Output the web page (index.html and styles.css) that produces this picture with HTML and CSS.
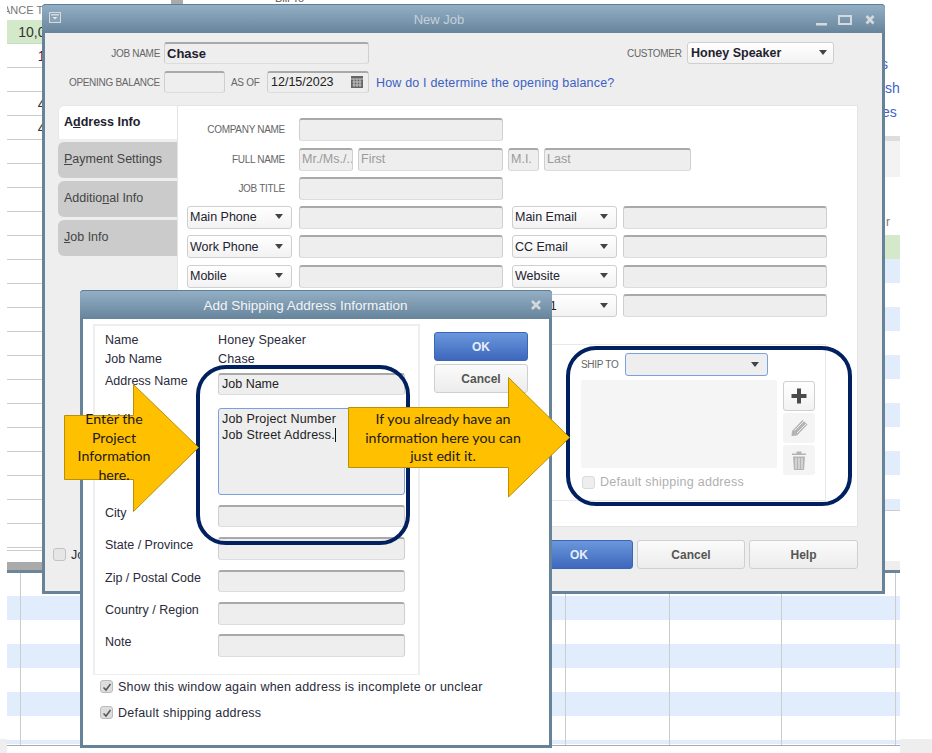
FILE: index.html
```html
<!DOCTYPE html>
<html lang="en">
<head>
<meta charset="utf-8">
<title>New Job</title>
<link rel="stylesheet" href="styles.css">
</head>
<body>
<div class="desktop">
  <div class="sheet">
    <div class="sheet-top">
      <div class="list-left">
        <div class="list-head"><span>ANCE T</span></div>
        <div class="list-row green"><span>10,000</span></div>
        <div class="list-row"><span class="plum">100</span></div>
        <div class="list-row"></div>
        <div class="list-row"><span>400</span></div>
        <div class="list-row"><span>400</span></div>
        <div class="list-row"></div><div class="list-row"></div><div class="list-row"></div><div class="list-row"></div><div class="list-row"></div>
        <div class="list-row"></div><div class="list-row"></div><div class="list-row"></div><div class="list-row"></div><div class="list-row"></div>
        <div class="list-row"></div><div class="list-row"></div><div class="list-row"></div><div class="list-row"></div><div class="list-row"></div>
        <div class="list-row"></div><div class="list-row"></div>
        <div class="list-foot"></div>
      </div>
      <div class="top-mid">
        <div class="top-mid-bar"></div>
        <div class="top-mid-text">Bill To</div>
      </div>
      <div class="list-right">
        <div class="links"><span class="lk1">s</span><span class="lk2">sh</span><span class="lk3">es</span></div>
        <div class="right-head"></div>
        <div class="right-cap">r</div>
        <div class="right-row green"></div>
        <div class="right-row blue"></div><div class="right-row"></div>
        <div class="right-row blue"></div><div class="right-row"></div>
        <div class="right-row blue"></div><div class="right-row"></div>
        <div class="right-row blue"></div><div class="right-row"></div>
        <div class="right-row blue"></div><div class="right-row"></div>
        <div class="right-row blue short"></div>
        <div class="right-foot"></div>
      </div>
    </div>
    <div class="grid-bottom">
      <div class="stripe white"></div><div class="stripe"></div>
      <div class="stripe white"></div><div class="stripe"></div>
      <div class="stripe white"></div><div class="stripe"></div>
      <div class="stripe white"></div><div class="stripe end"></div>
      <i class="col c1"></i><i class="col c2"></i><i class="col c3"></i><i class="col c4"></i><i class="col c5"></i>
    </div>
  </div>
  <div class="corner corner-l"></div>
  <div class="corner corner-r"></div>

  <section class="window newjob">
    <header class="titlebar">
      <svg class="sysmenu" width="12" height="11" viewBox="0 0 12 11"><rect x=".5" y=".5" width="11" height="10" fill="#8aa3b7" stroke="#d4dadf"/><rect x="2" y="2" width="8" height="1.5" fill="#d4dadf"/><path d="M3.500 5h5L6 7.500z" fill="#e6e9ec"/></svg>
      <span class="title-text dim">New Job</span>
      <svg class="winctl" width="60" height="12" viewBox="0 0 60 12"><rect x="0" y="8" width="11" height="2.500" fill="#d5d9dc"/><rect x="23" y="1" width="12" height="8" fill="none" stroke="#d5d9dc" stroke-width="2"/><path d="M50.500 1l7 7.500M57.500 1l-7 7.500" stroke="#d5d9dc" stroke-width="2.600"/></svg>
    </header>
    <div class="job-body">
      <div class="job-row jr1">
        <label class="cap cap-main">JOB NAME</label>
        <div class="field strong w-jobname">Chase</div>
        <label class="cap cap-cust">CUSTOMER</label>
        <div class="select strong w-cust">Honey Speaker<i class="caret"></i></div>
      </div>
      <div class="job-row jr2">
        <label class="cap cap-main">OPENING BALANCE</label>
        <div class="field w-open"></div>
        <label class="cap cap-asof">AS OF</label>
        <div class="field w-date">12/15/2023
          <svg class="cal" width="12" height="12" viewBox="0 0 12 12"><rect width="12" height="12" fill="#666"/><path d="M0 3h12M1.500 6h9M1.500 9h9M3 3v8M6 3v8M9 3v8" stroke="#c8c8c8"/></svg>
        </div>
        <a class="help-link">How do I determine the opening balance?</a>
      </div>
      <div class="tabs">
        <nav class="tab-list">
          <div class="tab active">A<u>d</u>dress Info</div>
          <div class="tab"><u>P</u>ayment Settings</div>
          <div class="tab">Additio<u>n</u>al Info</div>
          <div class="tab"><u>J</u>ob Info</div>
        </nav>
        <div class="tab-panel">
          <div class="name-row">
            <label class="cap cap-f">COMPANY NAME</label>
            <div class="field w-204"></div>
          </div>
          <div class="name-row">
            <label class="cap cap-f">FULL NAME</label>
            <div class="field ghost w-mr">Mr./Ms./...</div>
            <div class="field ghost w-first">First</div>
            <div class="field ghost w-mi">M.I.</div>
            <div class="field ghost w-last">Last</div>
          </div>
          <div class="name-row">
            <label class="cap cap-f">JOB TITLE</label>
            <div class="field w-204"></div>
          </div>
          <div class="contact-grid">
            <div class="select">Main Phone<i class="caret"></i></div><div class="field"></div>
            <div class="select">Main Email<i class="caret"></i></div><div class="field"></div>
            <div class="select">Work Phone<i class="caret"></i></div><div class="field"></div>
            <div class="select">CC Email<i class="caret"></i></div><div class="field"></div>
            <div class="select">Mobile<i class="caret"></i></div><div class="field"></div>
            <div class="select">Website<i class="caret"></i></div><div class="field"></div>
            <div class="select">Fax<i class="caret"></i></div><div class="field"></div>
            <div class="select">Other 1<i class="caret"></i></div><div class="field"></div>
          </div>
          <div class="ship-box">
            <div class="ship-inner">
              <div class="ship-top">
                <label class="cap cap-ship">SHIP TO</label>
                <div class="select focus w-shipsel"><i class="caret"></i></div>
              </div>
              <div class="ship-mid">
                <div class="ship-area"></div>
                <div class="ship-tools">
                  <div class="tool on"><svg width="18" height="18" viewBox="0 0 18 18"><path d="M7 1.500h4V7h5.500v4H11v5.500H7V11H1.500V7H7z" fill="#4b4b4b"/></svg></div>
                  <div class="tool"><svg width="20" height="20" viewBox="0 0 20 20"><path d="M2.500 18L3 13 13.500 2l5 4.500L8 17.500z" fill="#b4b4b4"/><path d="M5.500 12.500l9.500-9.500M8 15l9-9" stroke="#ececec"/></svg></div>
                  <div class="tool"><svg width="16" height="21" viewBox="0 0 16 21"><path d="M1 3.500h14V5H1zM5.500 1.500h5v2h-5z" fill="#b4b4b4"/><path d="M2 6.500h12l-1 13.500H3z" fill="#b4b4b4"/><path d="M5 8v11M8 8v11M11 8v11" stroke="#ececec" stroke-width="1.100"/></svg></div>
                </div>
              </div>
              <div class="ship-check"><i class="check faded"></i><span>Default shipping address</span></div>
            </div>
          </div>
        </div>
      </div>
      <footer class="job-foot">
        <div class="inactive"><i class="check"></i><span>Job is inactive</span></div>
        <div class="foot-btns">
          <div class="btn primary wide">OK</div>
          <div class="btn wide">Cancel</div>
          <div class="btn wide help">Help</div>
        </div>
      </footer>
    </div>
  </section>

  <section class="window shipdlg">
    <header class="titlebar short">
      <span class="title-text">Add Shipping Address Information</span>
      <svg class="dlgclose" width="10" height="10" viewBox="0 0 10 10"><path d="M1 1l8 8M9 1l-8 8" stroke="#d5d9dc" stroke-width="2.600"/></svg>
    </header>
    <div class="dlg-body">
      <div class="dlg-main">
        <div class="addr-panel">
          <div class="info-row first"><span class="addr-label">Name</span><span class="val">Honey Speaker</span></div>
          <div class="info-row"><span class="addr-label">Job Name</span><span class="val">Chase</span></div>
          <div class="addr-row m7"><span class="addr-label">Address Name</span><div class="field w-addr h22">Job Name</div></div>
          <div class="addr-row m13"><span class="addr-label low">Address</span>
            <div class="field focus w-addr h87 multi">Job Project Number<br>Job Street Address.<i class="cursor"></i></div></div>
          <div class="addr-row"><span class="addr-label">City</span><div class="field w-addr h22"></div></div>
          <div class="addr-row"><span class="addr-label">State / Province</span><div class="field w-addr h23"></div></div>
          <div class="addr-row"><span class="addr-label">Zip / Postal Code</span><div class="field w-addr h22"></div></div>
          <div class="addr-row"><span class="addr-label">Country / Region</span><div class="field w-addr h23"></div></div>
          <div class="addr-row m9"><span class="addr-label">Note</span><div class="field w-addr h23"></div></div>
        </div>
        <div class="dlg-btns">
          <div class="btn primary">OK</div>
          <div class="btn">Cancel</div>
        </div>
      </div>
      <div class="dlg-checks">
        <div class="dlg-check"><i class="check ticked"><svg width="10" height="10" viewBox="0 0 10 10"><path d="M1.500 5.500L4 8l4.500-6" fill="none" stroke="#555" stroke-width="1.500"/></svg></i><span>Show this window again when address is incomplete or unclear</span></div>
        <div class="dlg-check"><i class="check ticked"><svg width="10" height="10" viewBox="0 0 10 10"><path d="M1.500 5.500L4 8l4.500-6" fill="none" stroke="#555" stroke-width="1.500"/></svg></i><span>Default shipping address</span></div>
      </div>
    </div>
  </section>

  <div class="ring ring-left"></div>
  <div class="ring ring-right"></div>

  <div class="callout callout-left">
    <svg width="136" height="129" viewBox="0 0 136 129"><path d="M.5 31.500H69.500V.5L134.500 63.500 69.500 127.500V95.500H.5z" fill="#ffc000" stroke="#b8900a"/></svg>
    <p class="callout-text">Enter the<br>Project<br>Information<br>here.</p>
  </div>
  <div class="callout callout-right">
    <svg width="223" height="121" viewBox="0 0 223 121"><path d="M.5 30.500H160.500V.5L221.500 60.500 160.500 120V90.500H.5z" fill="#ffc000" stroke="#b8900a"/></svg>
    <p class="callout-text">If you already have an<br>information here you can<br>just edit it.</p>
  </div>
</div>
</body>
</html>
```
FILE: styles.css
```css
* { box-sizing: border-box; }
html, body { margin: 0; padding: 0; background: #fff; }
body { width: 932px; height: 753px; overflow: hidden; font-family: "Liberation Sans", Arial, sans-serif; font-size: 12.5px; color: #2a2a3a; }
.desktop { position: relative; width: 932px; height: 753px; overflow: hidden; }
i { display: block; font-style: normal; }

/* Background register */
.sheet { margin-left: 7px; width: 893px; }
.sheet-top { display: flex; height: 573px; }
.list-left { width: 60px; flex: none; }
.list-head { height: 20px; line-height: 21px; font-size: 11px; color: #777; white-space: nowrap; overflow: hidden; }
.list-head span { display: block; margin-left: -4px; }
.list-row { height: 24px; border-bottom: 1px solid #ccc; text-align: right; padding-top: 4px; padding-right: 6px; font-size: 14px; color: #333; }
.list-row span { display: inline-block; }
.list-row.green { background: #d3e9c9; border-bottom: 1px solid #c6dcbc; }
.plum { color: #3a1a4a; }
.list-foot { height: 25px; background: linear-gradient(#fff 0, #fff 2px, #ccc 2px, #ccc 3px, #fff 3px, #fff 14px, #aaa 14px, #aaa 22px, #6c8599 22px); }
.top-mid { flex: 1; position: relative; }
.top-mid-bar { width: 12px; height: 4px; margin-left: 104px; background: #aaa; }
.top-mid-text { margin-left: 208px; margin-top: -12px; font-size: 11px; color: #555; }
.list-right { width: 60px; flex: none; }
.links { height: 136px; padding-top: 57px; display: flex; flex-direction: column; gap: 10px; font-size: 14px; line-height: 14px; color: #3c64c8; }
.lk1 { margin-left: 41px; }
.lk2 { margin-left: 45px; }
.lk3 { margin-left: 42px; }
.right-head { height: 41px; background: linear-gradient(#ddd 0, #ddd 5px, #f3f3f3 5px); }
.right-cap { height: 58px; padding: 38px 0 0 46px; color: #777; font-size: 12px; }
.right-row { height: 24px; }
.right-row.green { background: #d3e9c9; }
.right-row.blue { background: #e1edfc; }
.right-row.short { height: 12px; border-bottom: 1px solid #ccc; }
.right-foot { height: 62px; background: linear-gradient(#fff 0, #fff 50px, #eee 50px, #eee 59px, #6c8599 59px); }
.grid-bottom { position: relative; height: 173px; border-bottom: 1px solid #aaa; }
.stripe { height: 24px; background: #e1edfc; }
.stripe.white { background: #fff; }
.stripe.end { height: 4px; }
.grid-bottom .stripe:first-child { height: 23px; }
.col { position: absolute; top: 0; bottom: 0; width: 1px; background: #ccc; }
.c1 { left: 13px; }
.c2 { left: 558px; }
.c3 { left: 662px; }
.c4 { left: 774px; }
.c5 { left: 888px; }
.corner { position: absolute; top: 739px; height: 14px; background: #eee; }
.corner-l { left: 0; width: 7px; }
.corner-r { left: 900px; width: 32px; }

/* Windows */
.window { position: absolute; background: #eee; border: 3px solid #67839a; border-top: 0; border-radius: 4px 4px 0 0; }
.newjob { left: 42px; top: 4px; width: 843px; height: 590px; }
.shipdlg { left: 80px; top: 290px; width: 472px; height: 458px; background: #fff; }
.titlebar { position: relative; height: 29px; margin: 0 -3px; display: flex; align-items: center; justify-content: center; background: linear-gradient(#93afc6, #66849b); border-top: 1px solid #5f7d95; border-radius: 4px 4px 0 0; }
.title-text { font-size: 13.500px; color: #f2f4f6; margin-right: 21px; }
.title-text.dim { color: #c6d0d8; font-size: 13px; margin-right: 49px; padding-top: 1px; }
.sysmenu { position: absolute; left: 7px; top: 7px; }
.winctl { position: absolute; left: 774px; top: 10px; }
.dlgclose { position: absolute; left: 451px; top: 9px; }

/* New Job body */
.job-row { display: flex; align-items: center; height: 22px; }
.jr1 { margin-top: 9px; }
.jr2 { margin-top: 7px; }
.cap { font-size: 10px; letter-spacing: -.3px; color: #666; text-transform: uppercase; white-space: nowrap; }
.job-row .cap { padding-top: 1px; }
.cap-main { width: 115px; text-align: right; margin-right: 4px; }
.cap-cust { margin-left: 258px; width: 54px; margin-right: 6px; }
.cap-asof { margin-left: 6px; margin-right: 7px; width: 29px; }
.cap-ship { width: 39px; }
.field { height: 23px; background: #eeeeee; border: 1px solid #dcdcdc; border-top: 2px solid #a9a9a9; border-left-color: #cfcfcf; border-right-color: #cfcfcf; border-radius: 3px; padding: 0 3px; line-height: 19px; font-size: 12.500px; color: #222; white-space: nowrap; flex: none; position: relative; }
.job-row .field, .job-row .select { height: 22px; }
.strong { font-weight: bold; font-size: 13px; color: #1d1d2e; }
.field.strong { padding-left: 2px; }
.select.strong { padding-left: 3px; }
.w-jobname { width: 205px; }
.w-open { width: 61px; }
.w-date { width: 102px; font-size: 12.500px; }
.cal { position: absolute; right: 5px; top: 3px; }
.w-cust { width: 147px; }
.w-cust .caret { right: 6px; }
.help-link { margin-left: 7px; padding-top: 2px; font-size: 12.500px; letter-spacing: .18px; color: #3c5fc4; white-space: nowrap; }
.select { height: 23px; display: flex; align-items: center; padding: 0 2px; background: linear-gradient(#fff, #f2f2f2); border: 1px solid #cfcfcf; border-radius: 3px; font-size: 12.500px; color: #22222e; white-space: nowrap; position: relative; flex: none; }
.caret { position: absolute; right: 8px; top: 50%; margin-top: -3px; width: 0; height: 0; border: 4.500px solid transparent; border-top: 5px solid #444; border-bottom: 0; }
.select.focus, .field.focus { border: 1px solid #7aa0de; }

.tabs { display: flex; margin: 12px 0 0 13px; height: 422px; }
.tab-list { width: 119px; flex: none; }
.tab { height: 36px; margin-bottom: 3px; background: #cbcbcb; border-radius: 6px 0 0 6px; padding: 10px 0 0 6px; font-size: 12.500px; color: #444; line-height: 14px; }
.tab.active { height: 34px; background: #fff; color: #1e1e2e; font-weight: bold; padding: 9px 0 0 5px; border-radius: 6px 0 0 0; border: 1px solid #e8e8e8; border-right: 0; border-bottom: 0; }
.tab-panel { width: 681px; flex: none; background: #fff; border: 1px solid #e4e4e4; padding: 12px 0 0 9px; }
.name-row { display: flex; align-items: center; height: 23px; margin-bottom: 6.500px; }
.cap-f { width: 98px; text-align: right; margin-right: 14px; }
.w-204 { width: 204px; }
.w-mr { width: 54px; margin-right: 5px; }
.w-first { width: 145px; margin-right: 5px; }
.w-mi { width: 31px; margin-right: 5px; }
.w-last { width: 147px; }
.ghost { color: #9a9a9a; padding-left: 2px; overflow: hidden; }
.contact-grid { display: grid; grid-template-columns: 105px 204px 105px 204px; column-gap: 7px; row-gap: 6.500px; margin-top: -1px; }
.contact-grid .select:nth-child(4n+3) { margin-left: 2px; width: 105px; }
.contact-grid .field:nth-child(4n) { margin-left: 1px; width: 204px; }
.ship-box { margin-top: 27px; width: 639px; height: 157px; border: 1px solid #e8e8e8; border-left: 0; padding: 8px 10px 0 0; display: flex; justify-content: flex-end; }
.ship-inner { width: 234px; }
.ship-top { display: flex; align-items: center; gap: 5px; }
.w-shipsel { width: 143px; background: #eee; }
.ship-mid { display: flex; gap: 6px; margin-top: 4px; }
.ship-area { width: 196px; height: 88px; background: #f5f5f5; border-radius: 2px; }
.ship-tools { display: flex; flex-direction: column; gap: 2px; padding-top: 1px; }
.tool { width: 32px; height: 30px; display: flex; align-items: center; justify-content: center; background: #f4f4f4; border-radius: 3px; }
.tool.on { background: linear-gradient(#fff, #f2f2f2); border: 1px solid #cfcfcf; }
.ship-check { display: flex; align-items: center; gap: 5px; margin-top: 0; padding-left: 1px; color: #b0b0b0; font-size: 12.500px; letter-spacing: .27px; }
.check { width: 13px; height: 13px; border: 1px solid #c2c2c2; background: #e6e6e6; border-radius: 3px; flex: none; display: flex; align-items: center; justify-content: center; }
.check.faded { border-color: #dadada; background: #eee; }
.check.ticked { border-color: #bbb; background: #ddd; }
.job-foot { display: flex; justify-content: space-between; align-items: center; margin-top: 13px; height: 29px; padding: 0 24px 0 8px; }
.inactive { display: flex; align-items: center; gap: 5px; white-space: nowrap; }
.foot-btns { display: flex; gap: 4px; }
.btn { height: 29px; display: flex; align-items: center; justify-content: center; background: linear-gradient(#fbfbfb, #ececec); border: 1px solid #cfcfcf; border-radius: 3px; font-weight: bold; font-size: 12px; color: #555; }
.btn.primary { background: linear-gradient(#6a97dc, #3d68bd); border-color: #3b66b8; color: #e8eef8; }
.btn.wide { width: 108px; }
.btn.help { width: 109px; }

/* Dialog */
.dlg-body { padding: 5px 0 0 10px; }
.dlg-main { display: flex; gap: 14px; align-items: flex-start; }
.addr-panel { width: 327px; height: 351px; border: 2px solid #eee; border-bottom-width: 1px; padding-left: 10px; }
.info-row { display: flex; height: 14px; line-height: 14px; margin-top: 5px; }
.info-row.first { margin-top: 7px; }
.info-row .addr-label { line-height: 14px; }
.val { letter-spacing: .15px; }
.addr-label { width: 113px; flex: none; line-height: 16px; white-space: nowrap; }
.addr-label.low { padding-top: 3px; }
.addr-row { display: flex; margin-top: 10px; }
.addr-row.m7 { margin-top: 7px; }
.addr-row.m13 { margin-top: 13px; }
.addr-row.m9 { margin-top: 9px; }
.w-addr { width: 187px; }
.h22 { height: 22px; }
.h23 { height: 23px; }
.h87 { height: 87px; }
.multi { white-space: normal; line-height: 16px; padding-top: 2px; letter-spacing: .2px; }
.cursor { display: inline-block; width: 1px; height: 14px; background: #111; vertical-align: -3px; }
.dlg-btns { width: 94px; display: flex; flex-direction: column; gap: 3px; margin-top: 8px; }
.dlg-checks { padding: 5px 0 0 7px; display: flex; flex-direction: column; gap: 13px; }
.dlg-check { display: flex; align-items: center; gap: 5px; height: 13px; white-space: nowrap; letter-spacing: .24px; }

/* Annotations */
.ring { position: absolute; border: 4px solid #002060; background: transparent; }
.ring-left { left: 196px; top: 365px; width: 214px; height: 180px; border-radius: 30px; }
.ring-right { left: 566px; top: 346px; width: 286px; height: 160px; border-radius: 30px; }
.callout { position: absolute; }
.callout svg { display: block; }
.callout-left { left: 64px; top: 384px; width: 136px; height: 129px; }
.callout-right { left: 348px; top: 377px; width: 223px; height: 121px; }
.callout-text { position: absolute; margin: 0; font-family: Lato, sans-serif; font-size: 14.200px; text-align: center; color: #1a1a1a; }
.callout-left .callout-text { left: 0; top: 26px; width: 100px; line-height: 18.500px; }
.callout-right .callout-text { left: 0; top: 33px; width: 190px; line-height: 18.500px; }
```
